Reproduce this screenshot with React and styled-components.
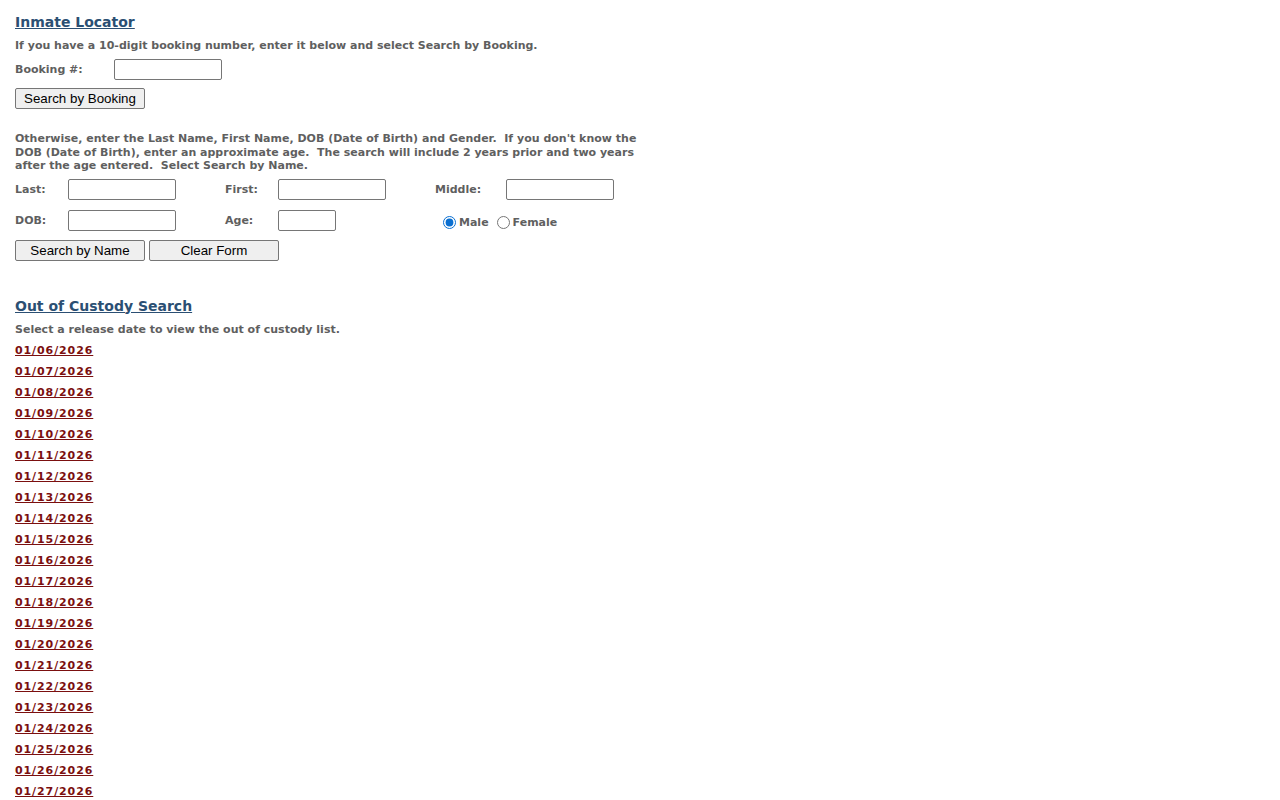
import React from 'react'
import styled, { createGlobalStyle } from 'styled-components'

const GlobalStyle = createGlobalStyle`
  html, body {
    margin: 0;
    padding: 0;
    background: #fff;
  }
  body {
    font-family: "DejaVu Sans", Verdana, sans-serif;
  }
`

const Page = styled.div`
  padding: 13px 15px 40px;
  color: #5f5f5f;
  font-size: 11px;
  font-weight: bold;
`

const Heading = styled.a`
  display: block;
  font-size: 14px;
  line-height: 18px;
  color: #2b4f73;
  text-decoration: underline;
  margin-top: ${p => p.$top || 0}px;
  width: max-content;
`

const Note = styled.p`
  margin: ${p => p.$top || 0}px 0 0;
  line-height: ${p => p.$lh || 14}px;
  width: ${p => p.$width || 'auto'};
`

const BookingRow = styled.div`
  display: flex;
  align-items: center;
  margin-top: 6px;
  height: 21px;
`

const Label = styled.label`
  display: inline-block;
  width: ${p => p.$width || 53}px;
`

const TextBox = styled.input`
  box-sizing: border-box;
  width: ${p => p.$width || 108}px;
  height: 21px;
  padding: 1px 2px;
  border: 1px solid #767676;
  border-radius: 2px;
  font: 13.33px "Liberation Sans", Arial, sans-serif;
  background: #fff;
`

const Button = styled.button`
  box-sizing: border-box;
  width: 130px;
  height: 21px;
  padding: 1px 6px;
  border: 1px solid #767676;
  border-radius: 2px;
  background: #efefef;
  color: #000;
  font: 13.33px "Liberation Sans", Arial, sans-serif;
`

const ButtonRow = styled.div`
  display: flex;
  gap: 4px;
  margin-top: ${p => p.$top || 0}px;
`

const FormGrid = styled.div`
  display: grid;
  grid-template-columns: 53px 157px 53px 157px 71px 108px;
  grid-auto-rows: 21px;
  row-gap: 10px;
  align-items: center;
  margin-top: 6px;
`

const Gender = styled.div`
  grid-column: 5 / span 2;
  display: flex;
  align-items: center;
  padding-left: 5px;
  padding-top: 4px;
`

const Radio = styled.input`
  width: 13px;
  height: 13px;
  margin: 0 3px 0 3px;
  accent-color: #0a6fd1;
`

const RadioLabel = styled.label`
  margin-right: 5px;
`

const DateList = styled.ul`
  list-style: none;
  margin: 3px 0 0;
  padding: 0;
`

const DateItem = styled.li`
  line-height: 21px;
  a {
    color: #7b0f0f;
    text-decoration: underline;
    letter-spacing: 0.9px;
  }
`

const dates = []
for (let d = 6; d <= 31; d++) {
  dates.push(`01/${String(d).padStart(2, '0')}/2026`)
}

export default function App() {
  return (
    <Page>
      <GlobalStyle />
      <Heading href="#">Inmate Locator</Heading>
      <Note $top={8}>
        If you have a 10-digit booking number, enter it below and select Search by Booking.
      </Note>
      <BookingRow>
        <Label $width={99}>Booking #:</Label>
        <TextBox type="text" />
      </BookingRow>
      <ButtonRow $top={8}>
        <Button>Search by Booking</Button>
      </ButtonRow>

      <Note $top={23} $lh={13.5} $width="630px">
        Otherwise, enter the Last Name, First Name, DOB (Date of Birth) and Gender.&nbsp; If you
        don't know the DOB (Date of Birth), enter an approximate age.&nbsp; The search will
        include 2 years prior and two years after the age entered.&nbsp; Select Search by Name.
      </Note>

      <FormGrid>
        <Label>Last:</Label>
        <TextBox type="text" />
        <Label>First:</Label>
        <TextBox type="text" />
        <Label>Middle:</Label>
        <TextBox type="text" />

        <Label>DOB:</Label>
        <TextBox type="text" />
        <Label>Age:</Label>
        <TextBox type="text" $width={58} />
        <Gender>
          <Radio type="radio" name="gender" id="male" defaultChecked />
          <RadioLabel htmlFor="male">Male</RadioLabel>
          <Radio type="radio" name="gender" id="female" />
          <RadioLabel htmlFor="female">Female</RadioLabel>
        </Gender>
      </FormGrid>

      <ButtonRow $top={9}>
        <Button>Search by Name</Button>
        <Button>Clear Form</Button>
      </ButtonRow>

      <Heading href="#" $top={36}>Out of Custody Search</Heading>
      <Note $top={8}>Select a release date to view the out of custody list.</Note>
      <DateList>
        {dates.map(d => (
          <DateItem key={d}>
            <a href="#">{d}</a>
          </DateItem>
        ))}
      </DateList>
    </Page>
  )
}
